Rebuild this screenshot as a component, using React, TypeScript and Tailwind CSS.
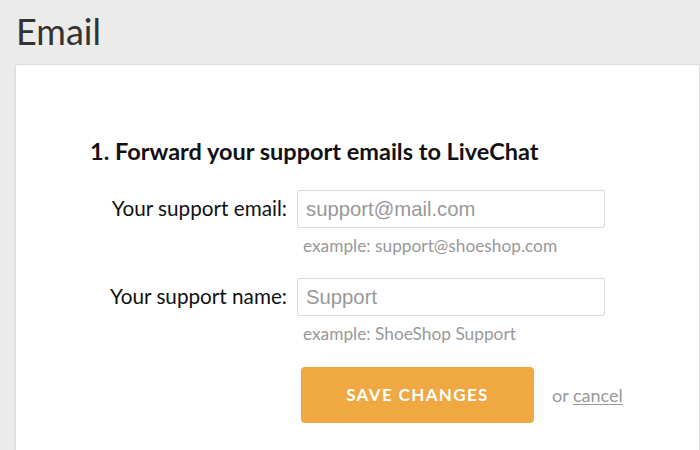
export default function App() {
  return (
    <div className="h-[450px] w-[700px] overflow-hidden bg-[#ebebeb] font-['Lato',sans-serif]">
      <h1 className="pl-[16px] pt-[6px] text-[36px] leading-[50px] text-[#333]">Email</h1>
      <div className="ml-[15px] mt-[8px] h-[400px] rounded-tl-[3px] border border-[#dcdcdc] bg-white shadow-[0_1px_2px_rgba(0,0,0,0.08)]">
        <div className="pl-[74px] pt-[71px]">
          <h2 className="text-[23.5px] font-bold leading-[30px] text-[#111]">
            1. Forward your support emails to LiveChat
          </h2>
          <div className="mt-[24px] grid grid-cols-[197px_308px] gap-x-[10px]">
            <label className="flex h-[38px] items-center justify-end text-[20.7px] text-[#111]">
              Your support email:
            </label>
            <div>
              <input
                className="h-[38px] w-full rounded-[2px] border border-[#dadada] px-[8px] font-['Liberation_Sans',sans-serif] text-[20.3px] outline-none placeholder:text-[#999]"
                placeholder="support@mail.com"
              />
              <p className="pl-[6px] pt-[7px] text-[17.3px] leading-[22px] text-[#999]">
                example: support@shoeshop.com
              </p>
            </div>
            <label className="mt-[21px] flex h-[38px] items-center justify-end text-[20.7px] text-[#111]">
              Your support name:
            </label>
            <div className="mt-[21px]">
              <input
                className="h-[38px] w-full rounded-[2px] border border-[#dadada] px-[8px] font-['Liberation_Sans',sans-serif] text-[20.3px] outline-none placeholder:text-[#999]"
                placeholder="Support"
              />
              <p className="pl-[6px] pt-[7px] text-[17.3px] leading-[22px] text-[#999]">
                example: ShoeShop Support
              </p>
            </div>
            <div />
            <div className="mt-[22px] flex items-center">
              <button className="ml-[4px] h-[56px] w-[233px] shrink-0 rounded-[4px] bg-[#f0a843] text-[17px] font-bold tracking-[0.08em] text-white">
                SAVE CHANGES
              </button>
              <span className="ml-[18px] whitespace-nowrap text-[18px] text-[#999]">
                or <a className="underline underline-offset-2" href="#">cancel</a>
              </span>
            </div>
          </div>
        </div>
      </div>
    </div>
  );
}
